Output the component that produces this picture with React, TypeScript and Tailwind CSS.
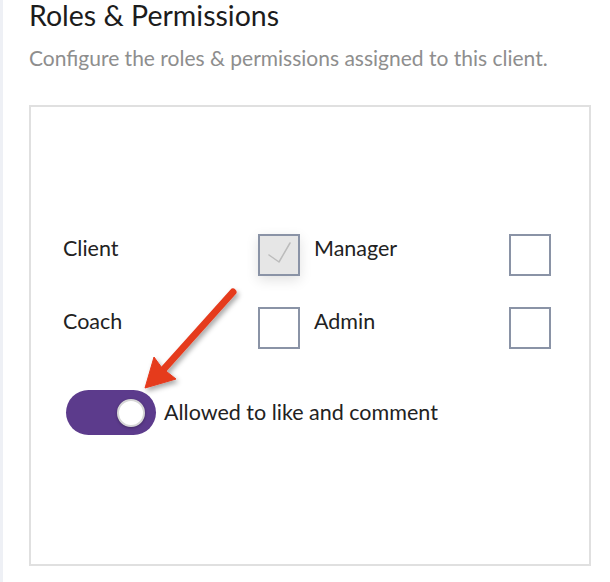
export default function App() {
  const font = { fontFamily: "Lato, 'Noto Sans', sans-serif" }
  return (
    <main className="relative w-[610px] h-[582px] bg-white border-l-[3px] border-[#eef0f5] overflow-hidden" style={font}>
      <div className="pl-[26px]">
        <h1 className="text-[28.5px] leading-[32px] text-[#1c1c1c] -mt-[1px]">Roles &amp; Permissions</h1>
        <p className="mt-[14px] text-[21px] leading-[26px] text-[#8e8e8e]">Configure the roles &amp; permissions assigned to this client.</p>

        <div className="mt-[34px] w-[562px] h-[461px] border-2 border-[#e0e0e0] pt-[127px] pl-[32px]">
          <div className="grid grid-cols-[195px_56px_195px_42px] gap-y-[31px] items-start text-[21.5px] leading-[28px] text-[#222]">
            <span>Client</span>
            <div className="w-[42px] h-[42px] border-2 border-[#8a93a6] bg-[#e6e6e6] shadow-[0_4px_12px_rgba(0,0,0,0.12)]">
              <svg width="38" height="38" viewBox="0 0 38 38" fill="none" stroke="#bcbcbc" strokeWidth="1.5" strokeLinecap="round" strokeLinejoin="round">
                <path d="M9 19L19 26L30 7" />
              </svg>
            </div>
            <span>Manager</span>
            <div className="w-[42px] h-[42px] border-2 border-[#8a93a6] bg-white" />

            <span>Coach</span>
            <div className="w-[42px] h-[42px] border-2 border-[#8a93a6] bg-white" />
            <span>Admin</span>
            <div className="w-[42px] h-[42px] border-2 border-[#8a93a6] bg-white" />
          </div>

          <div className="mt-[41px] ml-[3px] flex items-center gap-[8px]">
            <div className="w-[90px] h-[45px] rounded-full bg-[#5c3b8c] flex items-center justify-end pr-[11px]">
              <div className="w-[28px] h-[28px] rounded-full bg-white border-2 border-[#d6d6d6] shadow-[0_1px_3px_rgba(0,0,0,0.3)]" />
            </div>
            <span className="text-[21.5px] text-[#222]">Allowed to like and comment</span>
          </div>
        </div>
      </div>

      <svg className="absolute left-0 top-0 pointer-events-none" width="610" height="582" viewBox="0 0 610 582">
        <defs>
          <filter id="sh" x="-20%" y="-20%" width="140%" height="140%">
            <feDropShadow dx="2" dy="3" stdDeviation="2.5" floodColor="#000" floodOpacity="0.35" />
          </filter>
        </defs>
        <g filter="url(#sh)" fill="#e53a1e" stroke="#e53a1e">
          <line x1="230" y1="292" x2="160" y2="370" strokeWidth="7" strokeLinecap="round" />
          <path d="M142 388 L151 357 L159 368 L173 379 Z" strokeWidth="1" strokeLinejoin="round" />
        </g>
      </svg>
    </main>
  )
}
